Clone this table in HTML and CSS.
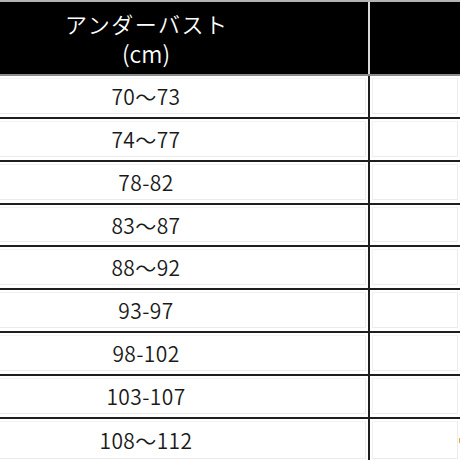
FILE: index.html
```html
<!DOCTYPE html>
<html lang="ja">
<head>
<meta charset="utf-8">
<link rel="stylesheet" href="styles.css">
</head>
<body>
<div class="frame">
<div class="sheet">
  <div class="head">
    <div class="hcell first"><div class="kana">アンダーバスト</div><div class="unit">(cm)</div></div>
    <div class="hdiv"></div>
    <div class="hcell second"></div>
  </div>
  <div class="hline"></div>
  <div class="row"><div class="cell first"><span>70～73</span></div><div class="vdiv"></div><div class="cell second"></div></div>
  <div class="row"><div class="cell first"><span>74～77</span></div><div class="vdiv"></div><div class="cell second"></div></div>
  <div class="row"><div class="cell first"><span>78-82</span></div><div class="vdiv"></div><div class="cell second"></div></div>
  <div class="row"><div class="cell first"><span>83～87</span></div><div class="vdiv"></div><div class="cell second"></div></div>
  <div class="row"><div class="cell first"><span>88～92</span></div><div class="vdiv"></div><div class="cell second"></div></div>
  <div class="row"><div class="cell first"><span>93-97</span></div><div class="vdiv"></div><div class="cell second"></div></div>
  <div class="row"><div class="cell first"><span>98-102</span></div><div class="vdiv"></div><div class="cell second"></div></div>
  <div class="row"><div class="cell first"><span>103-107</span></div><div class="vdiv"></div><div class="cell second"></div></div>
  <div class="row"><div class="cell first"><span>108～112</span></div><div class="vdiv"></div><div class="cell second"><span class="mark"></span></div></div>
</div>
</div>
</body>
</html>
```
FILE: styles.css
```css
html, body {
  margin: 0;
  padding: 0;
  background: #ffffff;
  overflow: hidden;
}
body {
  font-family: "Noto Sans CJK JP", "Noto Sans", sans-serif;
}
.frame {
  width: 460px;
  height: 460px;
  overflow: hidden;
}
.sheet {
  width: 536px;
  margin-left: -76px;
  border-top: 2px solid #b4b4b4;
}
.head {
  display: grid;
  grid-template-columns: 444px 2px 1fr;
  height: 72px;
  background: #000;
}
.hcell {
  display: flex;
  flex-direction: column;
  align-items: center;
  justify-content: center;
  color: #ffffff;
  font-weight: 350;
}
.kana {
  font-size: 22px;
  height: 30px;
  line-height: 30px;
  letter-spacing: 1.5px;
  margin-right: -1.5px;
}
.unit {
  font-size: 23px;
  height: 30px;
  line-height: 30px;
}
.hdiv {
  background: #d8d8d8;
}
.hline {
  height: 2px;
  background: #8c8c8c;
}
.row {
  display: grid;
  grid-template-columns: 444px 2px 1fr;
  height: 42.86px;
  box-sizing: border-box;
  border-bottom: 2px solid #1e1e1e;
}
.row:last-child {
  border-bottom: none;
}
.cell {
  display: flex;
  align-items: center;
  justify-content: center;
  box-sizing: border-box;
  margin: 2px 2px 3px 2px;
  border-top: 1px solid #f3f3f3;
  border-bottom: 1px solid #ececec;
  border-left: 1px solid #f0f0f0;
  border-right: 1px solid #ececec;
  color: #1a1a1a;
  font-size: 21px;
  font-weight: 350;
  letter-spacing: 0.4px;
  position: relative;
}
.vdiv {
  background: #1e1e1e;
}
.mark {
  position: absolute;
  left: 86px;
  top: 16px;
  width: 2px;
  height: 5px;
  background: #e8a838;
}
```
